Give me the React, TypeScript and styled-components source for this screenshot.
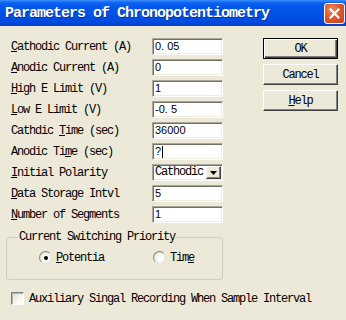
import React from 'react';
import styled, { createGlobalStyle } from 'styled-components';

const GlobalStyle = createGlobalStyle`
    body {
        margin: 0;
        background: #ece9d8;
    }
`;

const mono = `
    font-family: 'Liberation Mono', 'Courier New', monospace;
    font-size: 12px;
    letter-spacing: -1.2px;
    color: #000;
`;

const Window = styled.div`
    width: 346px;
    height: 320px;
    background: #ece9d8;
    display: flex;
    flex-direction: column;
    overflow: hidden;
    ${mono};
`;

const TitleBar = styled.div`
    height: 26px;
    display: flex;
    align-items: center;
    justify-content: space-between;
    padding: 0 1px 0 5px;
    background: linear-gradient(
        to bottom,
        #3d8ffb 0,
        #0a61f2 3px,
        #0057ea 7px,
        #0053e6 50%,
        #004ade 85%,
        #003fcc 100%
    );
`;

const Title = styled.span`
    font-family: 'Liberation Mono', 'Courier New', monospace;
    font-weight: bold;
    font-size: 15px;
    letter-spacing: -1px;
    color: #fff;
    text-shadow: 1px 1px 0 #0b2f9c;
    white-space: nowrap;
`;

const CloseButton = styled.div`
    width: 21px;
    height: 21px;
    box-sizing: border-box;
    border: 1px solid #fff;
    border-radius: 3px;
    background: radial-gradient(circle at 35% 30%, #f08a62 0, #e0582d 45%, #c9401a 100%);
    display: flex;
    align-items: center;
    justify-content: center;
`;

const Body = styled.div`
    padding: 12px 0 0 11px;
    display: flex;
    flex-direction: column;
`;

const TopSection = styled.div`
    display: flex;
    align-items: flex-start;
`;

const Form = styled.div`
    width: 212px;
    display: grid;
    grid-template-columns: 141px 71px;
    grid-auto-rows: 17px;
    row-gap: 4px;
    align-items: center;
`;

const Label = styled.span`
    white-space: nowrap;
    line-height: 12px;
`;

const Key = styled.span`
    text-decoration: underline;
    text-underline-offset: 1px;
`;

const Field = styled.div<{ $mono?: boolean }>`
    height: 17px;
    box-sizing: border-box;
    background: #fff;
    border: 1px solid;
    border-color: #aca899 #fff #fff #aca899;
    box-shadow: inset 1px 1px 0 #716f64, inset -1px -1px 0 #f1efe2;
    display: flex;
    align-items: center;
    justify-content: space-between;
    padding: 0 1px 0 2px;
    ${({ $mono }) =>
        $mono
            ? mono
            : `
        font-family: 'Liberation Sans', Arial, sans-serif;
        font-size: 11px;
        letter-spacing: 0;
        color: #000;
    `}
    line-height: 13px;
    white-space: pre;
`;

const Caret = styled.span`
    display: inline-block;
    width: 1px;
    height: 12px;
    background: #000;
    vertical-align: middle;
    margin-left: 1px;
`;

const DropButton = styled.div`
    width: 15px;
    height: 13px;
    box-sizing: border-box;
    background: #ece9d8;
    border: 1px solid;
    border-color: #fff #404040 #404040 #fff;
    box-shadow: inset -1px -1px 0 #808080;
    display: flex;
    align-items: center;
    justify-content: center;
`;

const ButtonColumn = styled.div`
    margin-left: 40px;
    display: flex;
    flex-direction: column;
    gap: 5px;
`;

const PushButton = styled.div<{ $default?: boolean }>`
    width: 75px;
    height: 21px;
    box-sizing: border-box;
    background: #ece9d8;
    border: 1px solid;
    border-color: ${({ $default }) => ($default ? '#000' : '#fff #404040 #404040 #fff')};
    box-shadow: ${({ $default }) =>
        $default
            ? 'inset 1px 1px 0 #fff, inset -1px -1px 0 #404040, inset -2px -2px 0 #808080'
            : 'inset -1px -1px 0 #808080'};
    display: flex;
    align-items: center;
    justify-content: center;
    line-height: 12px;
`;

const GroupBox = styled.fieldset`
    margin: 8px 0 0 -5px;
    width: 217px;
    height: 49px;
    box-sizing: border-box;
    padding: 0 0 0 11px;
    border: 1px solid #d0d0bf;
    border-radius: 3px;
`;

const Legend = styled.legend`
    padding: 0 1px;
    line-height: 12px;
`;

const RadioRow = styled.div`
    margin: 8px 0 0 21px;
    display: grid;
    grid-template-columns: 114px auto;
`;

const RadioItem = styled.label`
    display: inline-flex;
    align-items: center;
    gap: 4px;
    line-height: 12px;
`;

const RadioDot = styled.span<{ $checked?: boolean }>`
    width: 13px;
    height: 13px;
    box-sizing: border-box;
    border-radius: 50%;
    border: 1px solid;
    border-color: #8a8778 #e4e2d6 #e4e2d6 #8a8778;
    background: radial-gradient(circle at 60% 60%, #ffffff 0, #f6f5ef 45%, #d4d0c2 100%);
    display: flex;
    align-items: center;
    justify-content: center;

    &::after {
        content: '';
        width: 4px;
        height: 4px;
        border-radius: 50%;
        background: ${({ $checked }) => ($checked ? '#000' : 'transparent')};
    }
`;

const CheckRow = styled.label`
    margin-top: 12px;
    display: flex;
    align-items: center;
    gap: 5px;
    white-space: nowrap;
    line-height: 12px;
`;

const CheckBox = styled.span`
    width: 13px;
    height: 13px;
    box-sizing: border-box;
    border: 1px solid;
    border-color: #808080 #fff #fff #808080;
    box-shadow: inset 1px 1px 0 #b8b5a6;
    background: linear-gradient(135deg, #dcd9cc 0, #f4f3ee 50%, #fff 100%);
`;

const fields: { label: React.ReactNode; value: React.ReactNode; mono?: boolean }[] = [
    { label: <><Key>C</Key>athodic Current (A)</>, value: '0. 05' },
    { label: <><Key>A</Key>nodic Current (A)</>, value: '0' },
    { label: <><Key>H</Key>igh E Limit (V)</>, value: '1' },
    { label: <><Key>L</Key>ow E Limit (V)</>, value: '-0. 5' },
    { label: <>Cathdic <Key>T</Key>ime (sec)</>, value: '36000' },
    { label: <>Anodic Ti<Key>m</Key>e (sec)</>, value: <span>?<Caret /></span> },
    {
        label: <><Key>I</Key>nitial Polarity</>,
        mono: true,
        value: (
            <>
                <span>Cathodic</span>
                <DropButton>
                    <svg width="7" height="4" viewBox="0 0 7 4">
                        <path d="M0 0h7L3.5 4z" fill="#000" />
                    </svg>
                </DropButton>
            </>
        ),
    },
    { label: <><Key>D</Key>ata Storage Intvl</>, value: '5' },
    { label: <><Key>N</Key>umber of Segments</>, value: '1' },
];

const App = () => (
    <Window>
        <GlobalStyle />
        <TitleBar>
            <Title>Parameters of Chronopotentiometry</Title>
            <CloseButton>
                <svg width="11" height="11" viewBox="0 0 11 11">
                    <path d="M1.5 1.5l8 8M9.5 1.5l-8 8" stroke="#fff" strokeWidth="2.2" strokeLinecap="square" />
                </svg>
            </CloseButton>
        </TitleBar>
        <Body>
            <TopSection>
                <Form>
                    {fields.map((f, i) => (
                        <React.Fragment key={i}>
                            <Label>{f.label}</Label>
                            <Field $mono={f.mono}>{f.value}</Field>
                        </React.Fragment>
                    ))}
                </Form>
                <ButtonColumn>
                    <PushButton $default>OK</PushButton>
                    <PushButton>Cancel</PushButton>
                    <PushButton><span><Key>H</Key>elp</span></PushButton>
                </ButtonColumn>
            </TopSection>
            <GroupBox>
                <Legend>Current Switching Priority</Legend>
                <RadioRow>
                    <RadioItem>
                        <RadioDot $checked />
                        <span><Key>P</Key>otentia</span>
                    </RadioItem>
                    <RadioItem>
                        <RadioDot />
                        <span>Tim<Key>e</Key></span>
                    </RadioItem>
                </RadioRow>
            </GroupBox>
            <CheckRow>
                <CheckBox />
                <span>Auxiliary Singal Recording When Sample Interval</span>
            </CheckRow>
        </Body>
    </Window>
);

export default App;
